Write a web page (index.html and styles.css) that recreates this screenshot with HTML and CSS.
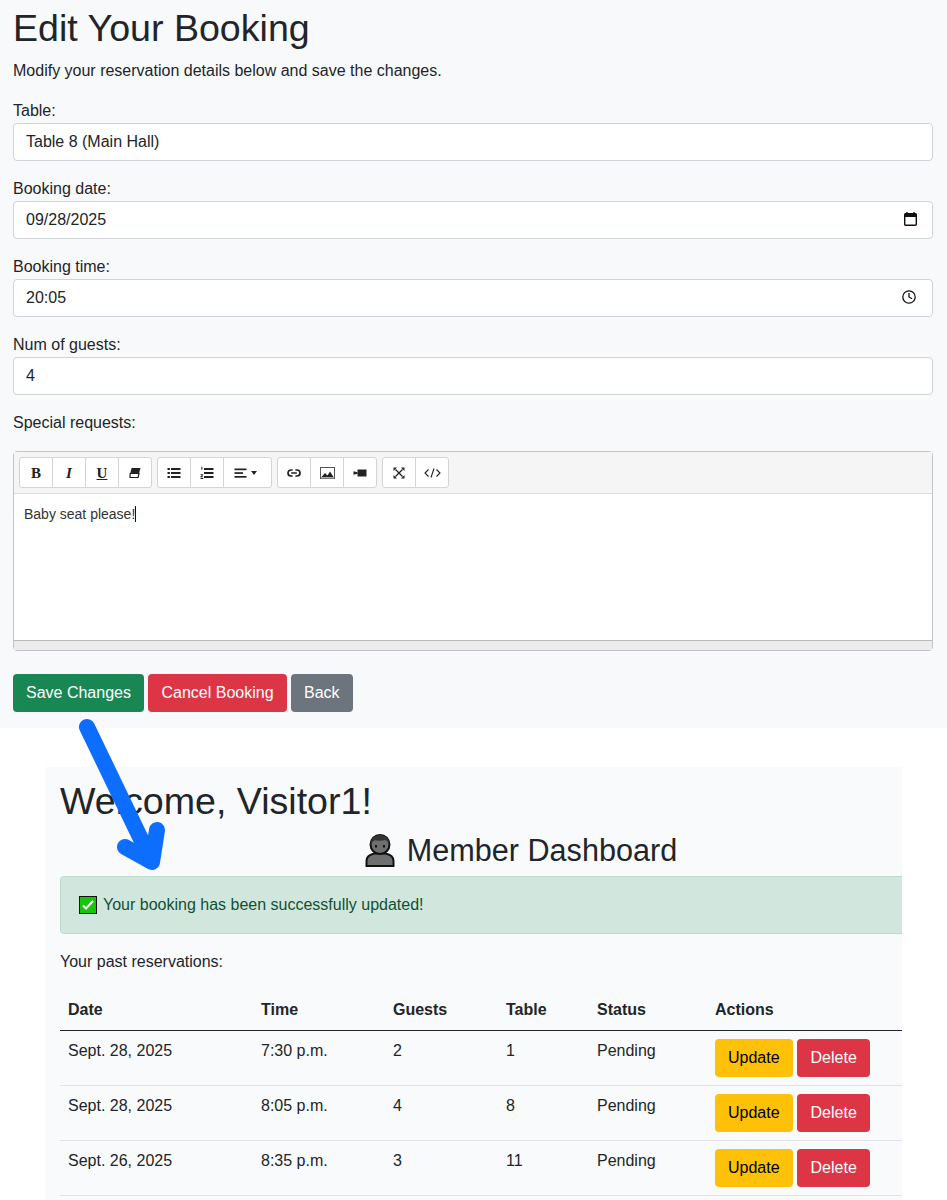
FILE: index.html
```html
<!DOCTYPE html>
<html lang="en">
<head>
    <meta charset="UTF-8">
    <meta name="viewport" content="width=device-width, initial-scale=1.0">
    <title>Edit Your Booking</title>
    <link rel="stylesheet" href="styles.css">
</head>
<body>
<div class="shot">

    <section class="edit-panel">
        <h1>Edit Your Booking</h1>
        <p>Modify your reservation details below and save the changes.</p>

        <form>
            <div class="field">
                <label for="table">Table:</label>
                <input class="control" id="table" type="text" value="Table 8 (Main Hall)">
            </div>
            <div class="field">
                <label for="date">Booking date:</label>
                <div class="with-icon">
                    <input class="control" id="date" type="text" value="09/28/2025">
                    <svg class="picker picker-date" width="13" height="14" viewBox="0 0 13 14">
                        <path d="M3 0v2M10 0v2" stroke="#111" stroke-width="1.4" fill="none"/>
                        <rect x="0.7" y="1.7" width="11.6" height="11.6" rx="1" fill="none" stroke="#111" stroke-width="1.4"/>
                        <rect x="0.7" y="1.700" width="11.6" height="3.3" fill="#111"/>
                    </svg>
                </div>
            </div>
            <div class="field">
                <label for="time">Booking time:</label>
                <div class="with-icon">
                    <input class="control" id="time" type="text" value="20:05">
                    <svg class="picker picker-time" width="14" height="14" viewBox="0 0 14 14">
                        <circle cx="7" cy="7" r="6.2" fill="none" stroke="#111" stroke-width="1.3"/>
                        <path d="M7 3v4l3 1.800" fill="none" stroke="#111" stroke-width="1.3"/>
                    </svg>
                </div>
            </div>
            <div class="field">
                <label for="guests">Num of guests:</label>
                <input class="control" id="guests" type="text" value="4">
            </div>
            <div class="field">
                <label>Special requests:</label>
            </div>

            <div class="editor">
                <div class="toolbar">
                    <div class="btn-group">
                        <span class="tool tool-b">B</span>
                        <span class="tool tool-i">I</span>
                        <span class="tool tool-u">U</span>
                        <span class="tool">
                            <svg width="12" height="12" viewBox="0 0 12 12">
                                <path d="M2.600 1h8.900L10 6.500H1.200z" fill="#222"/>
                                <path d="M1.200 6.500H10l-.9 4H1z" fill="none" stroke="#222" stroke-width="1.200"/>
                            </svg>
                        </span>
                    </div>
                    <div class="btn-group">
                        <span class="tool">
                            <svg width="14" height="14" viewBox="0 0 14 14" fill="#222">
                                <rect x="0.500" y="2" width="2.400" height="2"/><rect x="4" y="2" width="9.500" height="2"/>
                                <rect x="0.500" y="6" width="2.400" height="2"/><rect x="4" y="6" width="9.500" height="2"/>
                                <rect x="0.500" y="10" width="2.400" height="2"/><rect x="4" y="10" width="9.500" height="2"/>
                            </svg>
                        </span>
                        <span class="tool">
                            <svg width="14" height="14" viewBox="0 0 14 14" fill="#222">
                                <rect x="4" y="2" width="9.500" height="2"/><rect x="4" y="6" width="9.500" height="2"/><rect x="4" y="10" width="9.500" height="2"/>
                                <path d="M1.400 .8h1v3h-1zM.5 8.200h2.600v.7L1.600 10.600h1.600v.6H.4v-.7L2 9H.5z"/>
                                <rect x="0.500" y="12" width="2.800" height="1"/>
                            </svg>
                        </span>
                        <span class="tool tool-wide">
                            <svg width="13" height="14" viewBox="0 0 13 14" fill="#222">
                                <rect x="0.500" y="2.500" width="12" height="1.700"/><rect x="0.500" y="6.200" width="8.500" height="1.700"/><rect x="0.500" y="10" width="12" height="1.700"/>
                            </svg>
                            <svg class="caret" width="6" height="4" viewBox="0 0 6 4"><path d="M0 0h6L3 4z" fill="#222"/></svg>
                        </span>
                    </div>
                    <div class="btn-group">
                        <span class="tool">
                            <svg width="14" height="14" viewBox="0 0 14 14" fill="none" stroke="#222" stroke-width="1.700">
                                <path d="M5.600 4H4a3 3 0 0 0 0 6h1.600M8.400 4H10a3 3 0 0 1 0 6H8.400M4.200 7h5.600"/>
                            </svg>
                        </span>
                        <span class="tool">
                            <svg width="15" height="12" viewBox="0 0 15 12">
                                <rect x="0.500" y="0.500" width="14" height="11" fill="#fff" stroke="#555" stroke-width="1"/>
                                <path d="M1.500 10l3.500-4 2.500 2.500L10 4.500l3.500 5.500z" fill="#222"/>
                                <rect x="1" y="10" width="13" height="1.500" fill="#aaa"/>
                            </svg>
                        </span>
                        <span class="tool">
                            <svg width="14" height="14" viewBox="0 0 14 14" fill="#222">
                                <rect x="4.500" y="3.500" width="9" height="7"/><path d="M.5 5.200l4 1v1.600l-4 1z"/>
                            </svg>
                        </span>
                    </div>
                    <div class="btn-group">
                        <span class="tool">
                            <svg width="12" height="12" viewBox="0 0 12 12" fill="#222">
                                <path d="M2.500 2.500l7 7M9.500 2.500l-7 7" stroke="#222" stroke-width="1.300"/>
                                <path d="M.5.500h3.500L.5 4zM11.500.500V4L8 .500zM.5 11.500V8l3.500 3.500zM11.500 11.500H8l3.500-3.500z"/>
                            </svg>
                        </span>
                        <span class="tool">
                            <svg width="17" height="12" viewBox="0 0 17 12" fill="none" stroke="#222" stroke-width="1.100">
                                <path d="M4.500 2.500L1 6l3.500 3.500M12.500 2.500L16 6l-3.500 3.500M10 1.500L7 10.500"/>
                            </svg>
                        </span>
                    </div>
                </div>
                <div class="editable"><span class="typed">Baby seat please!</span></div>
                <div class="statusbar"></div>
            </div>

            <div class="form-actions">
                <button class="btn btn-success" type="button">Save Changes</button>
                <button class="btn btn-danger" type="button">Cancel Booking</button>
                <button class="btn btn-secondary" type="button">Back</button>
            </div>
        </form>
    </section>

    <section class="dash-panel">
        <div class="dash-inner">
            <h1>Welcome, Visitor1!</h1>
            <h2>
                <svg class="emoji-person" width="30" height="34" viewBox="0 0 30 34">
                    <path d="M1.500 33v-5c0-4 3-6.500 8-7.500h11c5 1 8 3.500 8 7.500v5z" fill="#6f6f6f" stroke="#111" stroke-width="2"/>
                    <circle cx="15" cy="11.500" r="9.500" fill="#6f6f6f" stroke="#111" stroke-width="2"/>
                    <path d="M5.500 12C5.500 5.500 9.500 2 15 2s9.500 3.500 9.500 10c-1-3-2.500-4.500-4.500-5-3 1-7 1-10 .3C8 8 6.500 9.500 5.500 12z" fill="#333"/>
                    <path d="M11 12v2.500M19 12v2.500" stroke="#111" stroke-width="2"/>
                </svg>
                Member Dashboard
            </h2>

            <div class="alert">
                <svg class="emoji-check" width="18" height="18" viewBox="0 0 18 18">
                    <rect x="0.500" y="0.500" width="17" height="17" fill="#16c60c" stroke="#111"/>
                    <path d="M4 9.500l3 3 7-7.500" fill="none" stroke="#fff" stroke-width="2"/>
                </svg>
                Your booking has been successfully updated!
            </div>

            <p>Your past reservations:</p>

            <table class="bookings">
                <colgroup>
                    <col class="col-date"><col class="col-time"><col class="col-guests">
                    <col class="col-table"><col class="col-status"><col class="col-actions">
                </colgroup>
                <thead>
                    <tr><th>Date</th><th>Time</th><th>Guests</th><th>Table</th><th>Status</th><th>Actions</th></tr>
                </thead>
                <tbody>
                    <tr>
                        <td>Sept. 28, 2025</td><td>7:30 p.m.</td><td>2</td><td>1</td><td>Pending</td>
                        <td><button class="btn btn-warning" type="button">Update</button> <button class="btn btn-danger" type="button">Delete</button></td>
                    </tr>
                    <tr>
                        <td>Sept. 28, 2025</td><td>8:05 p.m.</td><td>4</td><td>8</td><td>Pending</td>
                        <td><button class="btn btn-warning" type="button">Update</button> <button class="btn btn-danger" type="button">Delete</button></td>
                    </tr>
                    <tr>
                        <td>Sept. 26, 2025</td><td>8:35 p.m.</td><td>3</td><td>11</td><td>Pending</td>
                        <td><button class="btn btn-warning" type="button">Update</button> <button class="btn btn-danger" type="button">Delete</button></td>
                    </tr>
                </tbody>
            </table>
        </div>
    </section>

    <!-- arrow drawn over the two screenshots -->
    <svg class="arrow" width="947" height="1200" viewBox="0 0 947 1200">
        <path d="M87 727L152 862M125 847L152 862L157 830" fill="none" stroke="#0d6efd" stroke-width="16" stroke-linecap="round" stroke-linejoin="round"/>
    </svg>
</div>
</body>
</html>
```

FILE: styles.css
```css
* {
    box-sizing: border-box;
}
body {
    margin: 0;
    background: #fff;
    color: #212529;
    font-family: "Liberation Sans", Arial, sans-serif;
    font-size: 16px;
    line-height: 24px;
}
.shot {
    position: relative;
    height: 1200px;
    overflow: hidden;
}
h1 {
    margin: 0 0 7px;
    font-size: 37.6px;
    font-weight: 400;
    line-height: 48px;
}
p {
    margin: 0 0 16px;
}

/* top panel */
.edit-panel {
    height: 728px;
    padding: 4px 14px 16px 13px;
    background: #f8f9fb;
}
.field {
    margin-bottom: 16px;
}
.field label {
    display: block;
}
.control {
    display: block;
    width: 100%;
    height: 38px;
    padding: 6px 12px;
    border: 1px solid #ced4da;
    border-radius: 4px;
    background: #fff;
    color: #212529;
    font: inherit;
}
.with-icon {
    position: relative;
}
.picker {
    position: absolute;
    top: 11px;
}
.picker-date {
    right: 16px;
}
.picker-time {
    right: 17px;
}

/* rich text editor */
.editor {
    height: 200px;
    margin-bottom: 23px;
    border: 1px solid #c4c4c8;
    border-radius: 4px;
    display: flex;
    flex-direction: column;
    background: #fff;
}
.toolbar {
    display: flex;
    gap: 5px;
    height: 42px;
    padding: 5px 5px 0;
    border-bottom: 1px solid #ddd;
    background: #f5f5f5;
}
.btn-group {
    display: flex;
    height: 31px;
    border: 1px solid #d4d4d4;
    border-radius: 3px;
    background: #fff;
}
.tool {
    width: 33px;
    display: flex;
    align-items: center;
    justify-content: center;
    border-left: 1px solid #d4d4d4;
    color: #222;
    font-family: "Liberation Serif", serif;
    font-size: 15px;
}
.tool:first-child {
    width: 32px;
    border-left: 0;
}
.tool-wide {
    width: 48px;
    padding-right: 4px;
}
.caret {
    margin-left: 4px;
}
.tool-b {
    font-weight: 700;
}
.tool-i {
    font-style: italic;
    font-weight: 700;
}
.tool-u {
    font-weight: 700;
    text-decoration: underline;
}
.editable {
    flex: 1;
    padding: 10px;
    color: #333;
    font-size: 14px;
    line-height: 20px;
}
.typed {
    border-right: 1px solid #111;
}
.statusbar {
    height: 10px;
    border-top: 1px solid #bbb;
    background: #ececec;
}

/* buttons */
.btn {
    height: 38px;
    padding: 6px 12px;
    border: 1px solid transparent;
    border-radius: 4px;
    font: inherit;
    color: #fff;
    cursor: pointer;
}
.btn-success {
    background: #198754;
}
.btn-danger {
    padding: 6px 12.5px;
    background: #dc3545;
}
.btn-secondary {
    background: #6c757d;
}
.btn-warning {
    background: #ffc107;
    color: #000;
}
.form-actions {
    display: flex;
    gap: 4px;
}

/* dashboard panel */
.dash-panel {
    width: 857px;
    height: 433px;
    margin: 39px 0 0 45px;
    padding: 15px 0 0 15px;
    background: #f9fafc;
    overflow: hidden;
}
.dash-inner {
    width: 922px;
}
.dash-inner h1 {
    margin-bottom: 0;
    line-height: 38px;
}
.dash-inner h2 {
    display: flex;
    align-items: center;
    justify-content: center;
    gap: 12px;
    height: 38px;
    margin: 11px 0 7px;
    font-size: 30.6px;
    font-weight: 400;
    line-height: 38px;
}
.alert {
    display: flex;
    align-items: center;
    gap: 6px;
    height: 58px;
    margin-bottom: 16px;
    padding: 16px 16px 16px 18px;
    border: 1px solid #badbcc;
    border-radius: 4px;
    background: #d1e7dd;
    color: #0f5132;
}
.bookings {
    width: 922px;
    table-layout: fixed;
    border-collapse: collapse;
}
.col-date { width: 193px; }
.col-time { width: 132px; }
.col-guests { width: 113px; }
.col-table { width: 91px; }
.col-status { width: 118px; }
.col-actions { width: 275px; }
.bookings th {
    padding: 8px;
    border-bottom: 1px solid #212529;
    text-align: left;
    font-weight: 700;
}
.bookings td {
    padding: 8px;
    border-bottom: 1px solid #dee2e6;
    vertical-align: top;
}

/* annotation */
.arrow {
    position: absolute;
    top: 0;
    left: 0;
    pointer-events: none;
}
```
